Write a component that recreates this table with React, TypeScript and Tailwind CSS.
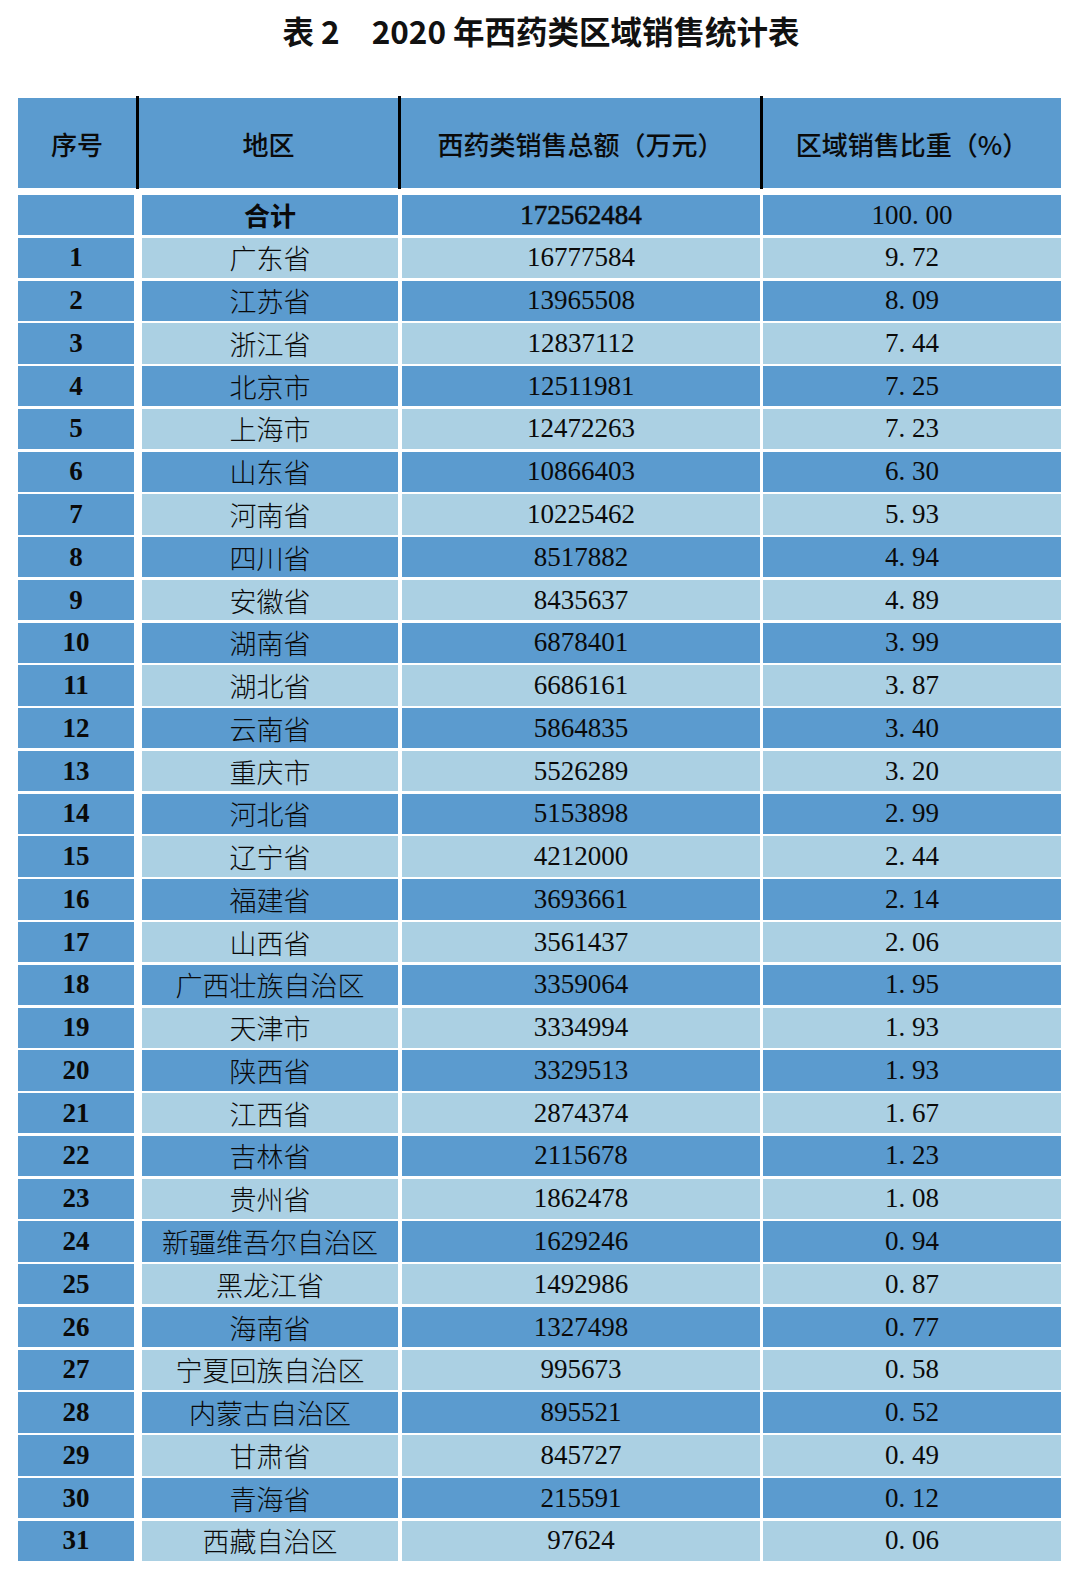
import React from 'react';

const rows: [string, string, string][] = [
  ['广东省', '16777584', '9.72'],
  ['江苏省', '13965508', '8.09'],
  ['浙江省', '12837112', '7.44'],
  ['北京市', '12511981', '7.25'],
  ['上海市', '12472263', '7.23'],
  ['山东省', '10866403', '6.30'],
  ['河南省', '10225462', '5.93'],
  ['四川省', '8517882', '4.94'],
  ['安徽省', '8435637', '4.89'],
  ['湖南省', '6878401', '3.99'],
  ['湖北省', '6686161', '3.87'],
  ['云南省', '5864835', '3.40'],
  ['重庆市', '5526289', '3.20'],
  ['河北省', '5153898', '2.99'],
  ['辽宁省', '4212000', '2.44'],
  ['福建省', '3693661', '2.14'],
  ['山西省', '3561437', '2.06'],
  ['广西壮族自治区', '3359064', '1.95'],
  ['天津市', '3334994', '1.93'],
  ['陕西省', '3329513', '1.93'],
  ['江西省', '2874374', '1.67'],
  ['吉林省', '2115678', '1.23'],
  ['贵州省', '1862478', '1.08'],
  ['新疆维吾尔自治区', '1629246', '0.94'],
  ['黑龙江省', '1492986', '0.87'],
  ['海南省', '1327498', '0.77'],
  ['宁夏回族自治区', '995673', '0.58'],
  ['内蒙古自治区', '895521', '0.52'],
  ['甘肃省', '845727', '0.49'],
  ['青海省', '215591', '0.12'],
  ['西藏自治区', '97624', '0.06'],
];

const sans = "font-['Noto_Sans_CJK_SC',sans-serif]";
const serif = "font-['Liberation_Serif','Noto_Sans_CJK_SC',serif]";

// SimSun-style percentage: the dot takes a full half-em cell
function Pct({ value }: { value: string }) {
  const [a, b] = value.split('.');
  return (
    <span>
      {a}
      <span className="inline-block w-[0.5em] text-left">.</span>
      {b}
    </span>
  );
}

function Row({
  no,
  region,
  amount,
  pct,
  dark,
  total = false,
}: {
  no: string;
  region: string;
  amount: string;
  pct: string;
  dark: boolean;
  total?: boolean;
}) {
  const bg = dark ? 'bg-[#5b9bcf]' : 'bg-[#abd0e3]';
  return (
    <div className="flex h-[40.3px] text-[27px] leading-none text-[#0a0a0a]">
      <div className={`w-[116px] bg-[#5b9bcf] flex items-center justify-center ${serif} font-bold`}>
        {no}
      </div>
      <div
        className={`ml-[8px] w-[256px] ${bg} flex items-center justify-center ${sans} ${
          total ? 'font-bold text-[26px]' : 'text-[27px] font-light'
        }`}
      >
        {region}
      </div>
      <div
        className={`ml-[4px] w-[358px] ${bg} flex items-center justify-center ${serif} ${
          total ? '[-webkit-text-stroke:0.6px_#0a0a0a]' : ''
        }`}
      >
        {amount}
      </div>
      <div className={`ml-[3px] w-[298px] ${bg} flex items-center justify-center ${serif}`}>
        <Pct value={pct} />
      </div>
    </div>
  );
}

export default function App() {
  return (
    <div className="w-[1080px] h-[1587px] bg-white">
      <h1
        className={`h-[62px] flex items-center justify-center pl-[2px] text-[31.5px] font-bold text-[#111] ${sans}`}
      >
        <span>表 2</span>
        <span className="ml-[32px]">2020 年西药类区域销售统计表</span>
      </h1>

      <div className="ml-[18px] w-[1043px] mt-[36px]">
        <div className={`flex h-[90px] bg-[#5b9bcf] text-[26px] font-medium text-[#0a0a0a] ${sans}`}>
          <div className="w-[118px] flex items-center justify-center">序号</div>
          <div className="w-[3px] h-[93px] -mt-[2px] bg-black" />
          <div className="w-[259px] flex items-center justify-center">地区</div>
          <div className="w-[3px] h-[93px] -mt-[2px] bg-black" />
          <div className="w-[359px] flex items-center justify-center">西药类销售总额（万元）</div>
          <div className="w-[3px] h-[93px] -mt-[2px] bg-black" />
          <div className="flex-1 flex items-center justify-center">区域销售比重（%）</div>
        </div>

        <div className="mt-[7px] flex flex-col gap-[2.47px]">
          <Row no="" region="合计" amount="172562484" pct="100.00" dark total />
          {rows.map(([region, amount, pct], i) => (
            <Row
              key={region}
              no={String(i + 1)}
              region={region}
              amount={amount}
              pct={pct}
              dark={i % 2 === 1}
            />
          ))}
        </div>
      </div>
    </div>
  );
}
